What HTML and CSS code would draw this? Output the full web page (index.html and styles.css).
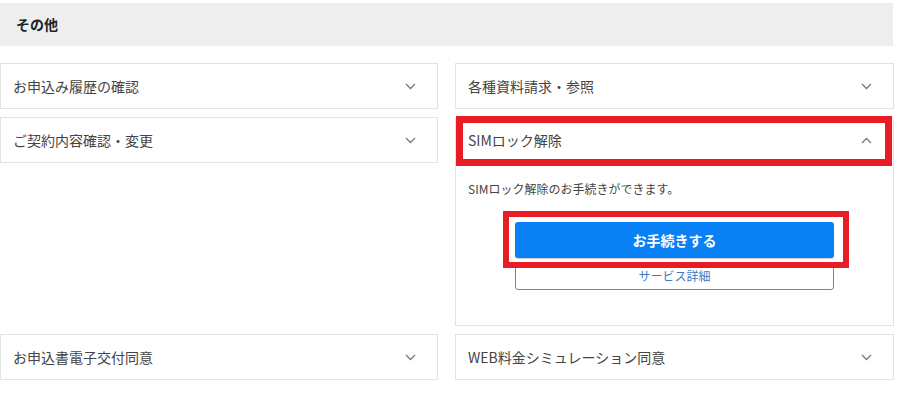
FILE: index.html
```html
<!DOCTYPE html>
<html lang="ja">
<head>
    <meta charset="UTF-8">
    <meta name="viewport" content="width=device-width, initial-scale=1.0">
    <title>その他</title>
    <link rel="stylesheet" href="styles.css">
</head>
<body>
    <div class="section">
        <h2 class="section-title">その他</h2>

        <div class="menu-grid">
            <div class="menu-card">
                <div class="menu-head">
                    <span>お申込み履歴の確認</span>
                    <svg class="chevron" width="11" height="7" viewBox="0 0 11 7"><polyline points="1,1 5.5,5.5 10,1" fill="none" stroke="#777" stroke-width="1.3"/></svg>
                </div>
            </div>
            <div class="menu-card">
                <div class="menu-head">
                    <span>各種資料請求・参照</span>
                    <svg class="chevron" width="11" height="7" viewBox="0 0 11 7"><polyline points="1,1 5.5,5.5 10,1" fill="none" stroke="#777" stroke-width="1.3"/></svg>
                </div>
            </div>

            <div class="menu-card">
                <div class="menu-head">
                    <span>ご契約内容確認・変更</span>
                    <svg class="chevron" width="11" height="7" viewBox="0 0 11 7"><polyline points="1,1 5.5,5.5 10,1" fill="none" stroke="#777" stroke-width="1.3"/></svg>
                </div>
            </div>
            <div class="menu-card open">
                <div class="menu-head marked">
                    <span>SIMロック解除</span>
                    <svg class="chevron" width="11" height="7" viewBox="0 0 11 7"><polyline points="1,6 5.5,1.5 10,6" fill="none" stroke="#777" stroke-width="1.3"/></svg>
                </div>
                <div class="menu-body">
                    <p class="menu-desc">SIMロック解除のお手続きができます。</p>
                    <div class="btn-group">
                        <div class="btn-mark">
                            <a href="#" class="btn btn-primary">お手続きする</a>
                        </div>
                        <a href="#" class="btn btn-outline">サービス詳細</a>
                    </div>
                </div>
            </div>

            <div class="menu-card">
                <div class="menu-head">
                    <span>お申込書電子交付同意</span>
                    <svg class="chevron" width="11" height="7" viewBox="0 0 11 7"><polyline points="1,1 5.5,5.5 10,1" fill="none" stroke="#777" stroke-width="1.3"/></svg>
                </div>
            </div>
            <div class="menu-card">
                <div class="menu-head">
                    <span>WEB料金シミュレーション同意</span>
                    <svg class="chevron" width="11" height="7" viewBox="0 0 11 7"><polyline points="1,1 5.5,5.5 10,1" fill="none" stroke="#777" stroke-width="1.3"/></svg>
                </div>
            </div>
        </div>
    </div>
</body>
</html>
```

FILE: styles.css
```css
* {
    margin: 0;
    padding: 0;
    box-sizing: border-box;
}
body {
    background-color: #fff;
    color: #333;
    font-family: "Noto Sans CJK JP", "Noto Sans", sans-serif;
    padding-top: 3px;
}
.section {
    width: 894px;
}
.section-title {
    background-color: #eeeeee;
    width: 893px;
    height: 43px;
    padding-left: 16px;
    font-size: 14px;
    font-weight: bold;
    line-height: 43px;
    color: #222;
}
.menu-grid {
    display: grid;
    grid-template-columns: 438px 439px;
    column-gap: 17px;
    row-gap: 8px;
    align-items: start;
    margin-top: 17px;
}
.menu-card {
    border: 1px solid #e3e3e3;
    background-color: #fff;
}
.menu-head {
    height: 44px;
    display: flex;
    align-items: center;
    justify-content: space-between;
    padding: 0 21px 0 12px;
    font-size: 14px;
    color: #444;
    position: relative;
}
.chevron {
    display: block;
}
/* red annotation frames */
.menu-head.marked::after {
    content: '';
    position: absolute;
    top: -2px;
    left: 0;
    right: 1px;
    bottom: -4px;
    border: 7px solid #e81c24;
}
.menu-body {
    padding: 0 12px 35px;
}
.menu-desc {
    font-size: 12px;
    line-height: 20px;
    margin-top: 17px;
    color: #444;
}
.btn-group {
    width: 319px;
    margin: 23px auto 0;
}
.btn-mark {
    position: relative;
}
.btn-mark::after {
    content: '';
    position: absolute;
    top: -11px;
    left: -12px;
    right: -15px;
    bottom: -10px;
    border: 6px solid #e81c24;
}
.btn {
    display: block;
    text-align: center;
    text-decoration: none;
    border-radius: 3px;
}
.btn-primary {
    height: 36px;
    line-height: 36px;
    background-color: #0a80f5;
    color: #fff;
    font-size: 14px;
    font-weight: bold;
    box-shadow: 0 1px 1px rgba(0,0,0,0.2);
}
.btn-outline {
    height: 28px;
    line-height: 26px;
    margin-top: 4px;
    border: 1px solid #4a90d6;
    color: #3b78c2;
    font-size: 12px;
}
```
